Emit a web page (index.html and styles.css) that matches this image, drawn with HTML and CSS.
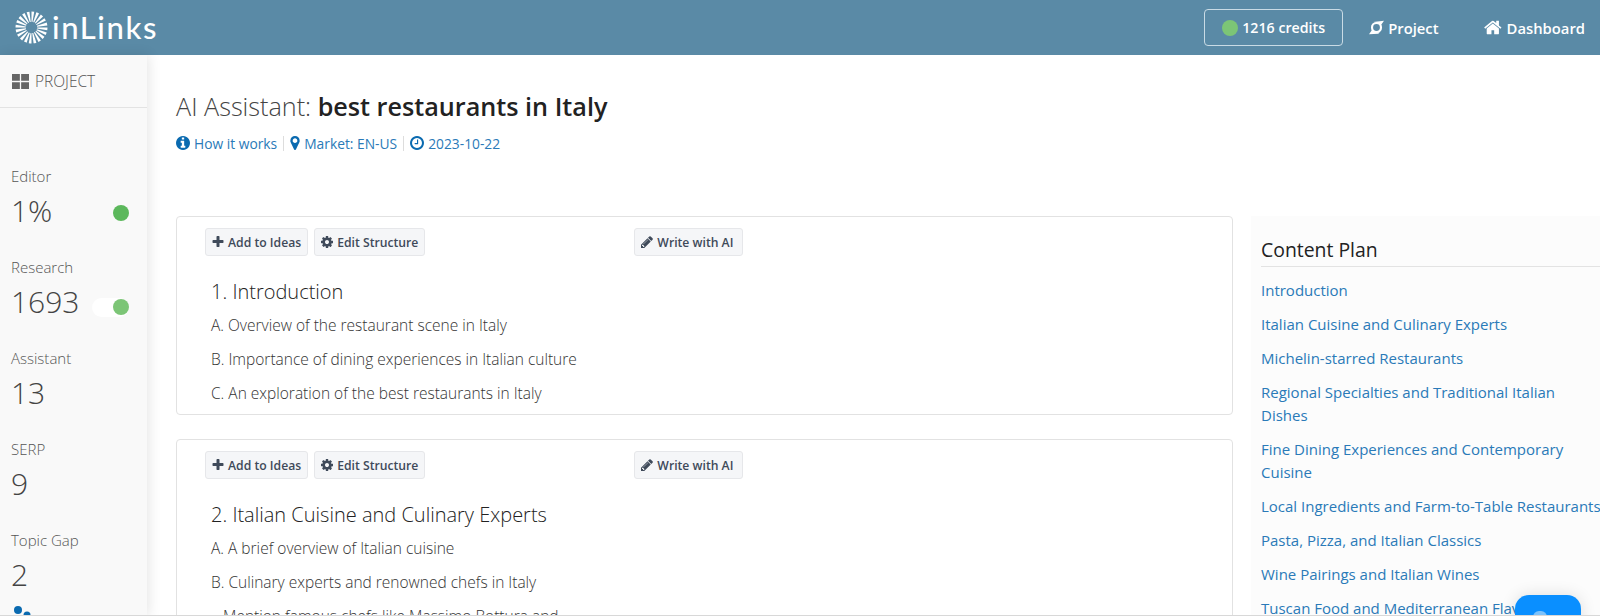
FILE: index.html
```html
<!DOCTYPE html>
<html lang="en">
<head>
    <meta charset="UTF-8">
    <title>AI Assistant</title>
    <link rel="stylesheet" href="styles.css">
</head>
<body>

    <header class="topbar">
        <a class="logo">
            <svg class="logo-mark" viewBox="0 0 32 32"><circle cx="16" cy="16" r="10.5" fill="none" stroke="#fff" stroke-width="10" pathLength="60" stroke-dasharray="1.7 1.3"/></svg>
            <span class="logo-text">inLinks</span>
        </a>
        <nav class="topnav">
            <span class="credits"><i class="dot dot-light"></i>1216 credits</span>
            <a class="navlink nav-project">
                <svg class="nav-icon" viewBox="1 1.500 18 17"><circle cx="10" cy="10" r="5.4" fill="none" stroke="#fff" stroke-width="2.6"/><path d="M6 3.500L19 2l-4 5.500-2-2.500zM1 18l4-5.500 2 2.500 7 1-2 1.500z" fill="#fff"/></svg>
                Project
            </a>
            <a class="navlink">
                <svg class="nav-icon home" viewBox="0 0 1792 1792"><path fill="#fff" d="M1408 992v480q0 26-19 45t-45 19h-384v-384h-256v384h-384q-26 0-45-19t-19-45v-480q0-1 .5-3t.5-3l575-474 575 474q1 2 1 6zm223-69l-62 74q-8 9-21 11h-3q-13 0-21-7l-692-577-692 577q-12 8-24 7-13-2-21-11l-62-74q-8-10-7-23.5t11-21.5l719-599q32-26 76-26t76 26l244 204v-195q0-14 9-23t23-9h192q14 0 23 9t9 23v408l219 182q10 8 11 21.5t-7 23.5z"/></svg>
                Dashboard
            </a>
        </nav>
    </header>

    <div class="page">
        <aside class="sidebar">
            <div class="side-head">
                <svg class="th-icon" viewBox="0 0 16 14"><path fill="#666" d="M0 0h7.4v6.4H0zM8.600 0H16v6.400H8.600zM0 7.600h7.400V14H0zM8.600 7.600H16V14H8.600z"/></svg>
                PROJECT
            </div>
            <div class="stats">
                <div class="stat">
                    <div class="stat-label">Editor</div>
                    <div class="stat-row"><span class="stat-value">1%</span><i class="dot dot-dark"></i></div>
                </div>
                <div class="stat">
                    <div class="stat-label">Research</div>
                    <div class="stat-row"><span class="stat-value">1693</span><span class="pill"><i class="dot dot-light"></i></span></div>
                </div>
                <div class="stat">
                    <div class="stat-label">Assistant</div>
                    <div class="stat-row"><span class="stat-value">13</span></div>
                </div>
                <div class="stat">
                    <div class="stat-label">SERP</div>
                    <div class="stat-row"><span class="stat-value">9</span></div>
                </div>
                <div class="stat">
                    <div class="stat-label">Topic Gap</div>
                    <div class="stat-row"><span class="stat-value">2</span></div>
                </div>
            </div>
            <svg class="side-extra" viewBox="0 0 20 14"><circle cx="4" cy="4" r="4" fill="#0a6ab0"/><circle cx="13" cy="9" r="3.500" fill="#0a6ab0"/></svg>
        </aside>

        <main class="main">
            <h1 class="title">AI Assistant: <b>best restaurants in Italy</b></h1>
            <div class="meta">
                <a><svg class="meta-icon" viewBox="128 128 1536 1536"><path d="M1152 1376v-160q0-14-9-23t-23-9h-96v-512q0-14-9-23t-23-9h-320q-14 0-23 9t-9 23v160q0 14 9 23t23 9h96v320h-96q-14 0-23 9t-9 23v160q0 14 9 23t23 9h448q14 0 23-9t9-23zm-128-896v-160q0-14-9-23t-23-9h-192q-14 0-23 9t-9 23v160q0 14 9 23t23 9h192q14 0 23-9t9-23zm640 416q0 209-103 385.500t-279.500 279.500-385.500 103-385.500-103-279.500-279.500-103-385.500 103-385.500 279.500-279.500 385.500-103 385.500 103 279.500 279.500 103 385.500z"/></svg>How it works</a>
                <span class="sep"></span>
                <a><svg class="meta-icon meta-pin" viewBox="384 128 1024 1536"><path d="M1152 640q0-106-75-181t-181-75-181 75-75 181 75 181 181 75 181-75 75-181zm256 0q0 109-33 179l-364 774q-16 33-47.500 52t-67.500 19-67.500-19-46.500-52l-365-774q-33-70-33-179 0-212 150-362t362-150 362 150 150 362z"/></svg>Market: EN-US</a>
                <span class="sep"></span>
                <a><svg class="meta-icon" viewBox="128 128 1536 1536"><path d="M1024 544v448q0 14-9 23t-23 9h-320q-14 0-23-9t-9-23v-64q0-14 9-23t23-9h224v-352q0-14 9-23t23-9h64q14 0 23 9t9 23zm416 352q0-148-73-273t-198-198-273-73-273 73-198 198-73 273 73 273 198 198 273 73 273-73 198-198 73-273zm224 0q0 209-103 385.500t-279.500 279.500-385.500 103-385.500-103-279.500-279.500-103-385.500 103-385.500 279.500-279.500 385.500-103 385.500 103 279.500 279.500 103 385.500z"/></svg>2023-10-22</a>
            </div>

            <div class="columns">
                <div class="sections">
                    <section class="card">
                        <div class="toolbar">
                            <button class="btn"><svg class="btn-icon" viewBox="128 128 1536 1536"><path d="M1600 736v192q0 40-28 68t-68 28h-416v416q0 40-28 68t-68 28h-192q-40 0-68-28t-28-68v-416h-416q-40 0-68-28t-28-68v-192q0-40 28-68t68-28h416v-416q0-40 28-68t68-28h192q40 0 68 28t28 68v416h416q40 0 68 28t28 68z"/></svg>Add to Ideas</button>
                            <button class="btn"><svg class="btn-icon" viewBox="128 128 1536 1536"><path d="M1152 896q0-106-75-181t-181-75-181 75-75 181 75 181 181 75 181-75 75-181zm512-109v222q0 12-8 23t-20 13l-185 28q-19 54-39 91 35 50 107 138 10 12 10 25t-9 23q-27 37-99 108t-94 71q-12 0-26-9l-138-108q-44 23-91 38-16 136-29 186-7 28-36 28h-222q-14 0-24.500-8.500t-11.500-21.500l-28-184q-49-16-90-37l-141 107q-10 9-25 9-14 0-25-11-126-114-165-168-7-10-7-23 0-12 8-23 15-21 51-66.500t54-70.500q-27-50-41-99l-183-27q-13-2-21-12.500t-8-23.500v-222q0-12 8-23t19-13l186-28q14-46 39-92-40-57-107-138-10-12-10-24 0-10 9-23 26-36 98.500-107.500t94.500-71.500q13 0 26 10l138 107q44-23 91-38 16-136 29-186 7-28 36-28h222q14 0 24.500 8.500t11.500 21.500l28 184q49 16 90 37l142-107q9-9 24-9 13 0 25 10 129 119 165 170 7 8 7 22 0 12-8 23-15 21-51 66.500t-54 70.500q26 50 41 98l183 28q13 2 21 12.500t8 23.500z"/></svg>Edit Structure</button>
                            <button class="btn btn-write"><svg class="btn-icon" viewBox="128 128 1536 1536"><path d="M491 1536l91-91-235-235-91 91v107h128v128h107zm523-928q0-22-22-22-10 0-17 7l-542 542q-7 7-7 17 0 22 22 22 10 0 17-7l542-542q7-7 7-17zm-54-192l416 416-832 832h-416v-416zm683 96q0 53-37 90l-166 166-416-416 166-165q36-38 90-38 53 0 91 38l235 234q37 39 37 91z"/></svg>Write with AI</button>
                        </div>
                        <h2 class="sec-title">1. Introduction</h2>
                        <p>A. Overview of the restaurant scene in Italy</p>
                        <p>B. Importance of dining experiences in Italian culture</p>
                        <p>C. An exploration of the best restaurants in Italy</p>
                    </section>

                    <section class="card">
                        <div class="toolbar">
                            <button class="btn"><svg class="btn-icon" viewBox="128 128 1536 1536"><path d="M1600 736v192q0 40-28 68t-68 28h-416v416q0 40-28 68t-68 28h-192q-40 0-68-28t-28-68v-416h-416q-40 0-68-28t-28-68v-192q0-40 28-68t68-28h416v-416q0-40 28-68t68-28h192q40 0 68 28t28 68v416h416q40 0 68 28t28 68z"/></svg>Add to Ideas</button>
                            <button class="btn"><svg class="btn-icon" viewBox="128 128 1536 1536"><path d="M1152 896q0-106-75-181t-181-75-181 75-75 181 75 181 181 75 181-75 75-181zm512-109v222q0 12-8 23t-20 13l-185 28q-19 54-39 91 35 50 107 138 10 12 10 25t-9 23q-27 37-99 108t-94 71q-12 0-26-9l-138-108q-44 23-91 38-16 136-29 186-7 28-36 28h-222q-14 0-24.500-8.500t-11.500-21.500l-28-184q-49-16-90-37l-141 107q-10 9-25 9-14 0-25-11-126-114-165-168-7-10-7-23 0-12 8-23 15-21 51-66.500t54-70.500q-27-50-41-99l-183-27q-13-2-21-12.500t-8-23.500v-222q0-12 8-23t19-13l186-28q14-46 39-92-40-57-107-138-10-12-10-24 0-10 9-23 26-36 98.500-107.500t94.500-71.500q13 0 26 10l138 107q44-23 91-38 16-136 29-186 7-28 36-28h222q14 0 24.500 8.500t11.500 21.500l28 184q49 16 90 37l142-107q9-9 24-9 13 0 25 10 129 119 165 170 7 8 7 22 0 12-8 23-15 21-51 66.500t-54 70.500q26 50 41 98l183 28q13 2 21 12.500t8 23.500z"/></svg>Edit Structure</button>
                            <button class="btn btn-write"><svg class="btn-icon" viewBox="128 128 1536 1536"><path d="M491 1536l91-91-235-235-91 91v107h128v128h107zm523-928q0-22-22-22-10 0-17 7l-542 542q-7 7-7 17 0 22 22 22 10 0 17-7l542-542q7-7 7-17zm-54-192l416 416-832 832h-416v-416zm683 96q0 53-37 90l-166 166-416-416 166-165q36-38 90-38 53 0 91 38l235 234q37 39 37 91z"/></svg>Write with AI</button>
                        </div>
                        <h2 class="sec-title">2. Italian Cuisine and Culinary Experts</h2>
                        <p>A. A brief overview of Italian cuisine</p>
                        <p>B. Culinary experts and renowned chefs in Italy</p>
                        <p class="sub">- Mention famous chefs like Massimo Bottura and</p>
                    </section>
                </div>

                <div class="plan">
                    <h3 class="plan-title">Content Plan</h3>
                    <a>Introduction</a>
                    <a>Italian Cuisine and Culinary Experts</a>
                    <a>Michelin-starred Restaurants</a>
                    <a>Regional Specialties and Traditional Italian Dishes</a>
                    <a>Fine Dining Experiences and Contemporary Cuisine</a>
                    <a class="nowrap">Local Ingredients and Farm-to-Table Restaurants</a>
                    <a>Pasta, Pizza, and Italian Classics</a>
                    <a>Wine Pairings and Italian Wines</a>
                    <a class="nowrap">Tuscan Food and Mediterranean Flavors</a>
                </div>
            </div>
        </main>
    </div>

    <div class="chat"><i class="chat-dot"></i></div>
    <div class="edge"></div>

</body>
</html>
```

FILE: styles.css
```css
* {
    box-sizing: border-box;
}
html, body {
    height: 100%;
    overflow: hidden;
}
body {
    margin: 0;
    font-family: "Open Sans", "Liberation Sans", sans-serif;
    font-size: 14px;
    color: #444;
    background: #fff;
}
.topbar {
    height: 55px;
    background-color: #5a8aa6;
    display: flex;
    align-items: center;
    justify-content: space-between;
    padding: 0 15px;
    color: #fff;
}
.logo {
    display: flex;
    align-items: center;
    gap: 4px;
}
.logo-mark {
    width: 33px;
    height: 33px;
}
.logo-text {
    font-family: "Lato", sans-serif;
    font-size: 31px;
    font-weight: 500;
    letter-spacing: 1.6px;
    line-height: 1;
}
.topnav {
    display: flex;
    align-items: center;
    font-weight: 600;
    font-size: 14.8px;
}
.credits {
    width: 139px;
    height: 37px;
    border: 1px solid #c9dbe5;
    border-radius: 4px;
    display: flex;
    align-items: center;
    justify-content: center;
    gap: 4px;
    font-size: 14.2px;
}
.navlink {
    display: flex;
    align-items: center;
    gap: 4px;
}
.nav-project {
    margin: 0 45px 0 26px;
}
.nav-icon {
    width: 15px;
    height: 15px;
}
.home {
    width: 19px;
    height: 19px;
}
.dot {
    display: inline-block;
    width: 16px;
    height: 16px;
    border-radius: 50%;
}
.dot-light {
    background-color: #7cc576;
}
.dot-dark {
    background-color: #5cb85c;
    margin: 6px 6px 0 0;
}
.page {
    display: flex;
    height: calc(100% - 55px);
}
.sidebar {
    width: 147px;
    flex-shrink: 0;
    background-color: #f9f9f9;
    box-shadow: 2px 0 12px rgba(0, 0, 0, 0.1);
    position: relative;
    overflow: hidden;
}
.side-head {
    height: 53px;
    border-bottom: 1px solid #e3e3e3;
    padding: 0 12px;
    display: flex;
    align-items: center;
    gap: 6px;
    font-size: 15.5px;
    font-weight: 300;
    color: #555;
}
.th-icon {
    width: 17px;
    height: 15px;
}
.stats {
    padding: 58px 12px 0 11px;
}
.stat {
    height: 91px;
}
.stat-label {
    font-size: 15px;
    line-height: 20px;
    font-weight: 300;
    color: #555;
}
.stat-row {
    display: flex;
    align-items: center;
    justify-content: space-between;
    height: 48px;
}
.stat-value {
    font-size: 30px;
    font-weight: 300;
    color: #444;
}
.pill {
    width: 37px;
    height: 19px;
    margin: 12px 6px 0 0;
    background: #fff;
    border-radius: 10px;
    display: flex;
    align-items: center;
    justify-content: flex-end;
}
.side-extra {
    position: absolute;
    left: 14px;
    bottom: -4px;
    width: 20px;
    height: 14px;
}
.main {
    flex: 1;
    min-width: 0;
    padding: 0 0 0 29px;
}
.title {
    margin: 34px 0 0;
    font-size: 25.2px;
    line-height: 34px;
    font-weight: 300;
    color: #444;
}
.title b {
    font-weight: 600;
    color: #222;
}
.meta {
    display: flex;
    align-items: center;
    margin-top: 10px;
    font-size: 13.8px;
    height: 20px;
    color: #2a7ab8;
}
.meta a {
    display: flex;
    align-items: center;
    gap: 4px;
}
.meta-icon {
    width: 14px;
    height: 14px;
    fill: #0a6ab0;
}
.meta-pin {
    width: 10px;
}
.sep {
    width: 1px;
    height: 15px;
    background: #ddd;
    margin: 0 6px;
}
.columns {
    display: flex;
    gap: 18px;
    margin-top: 63px;
}
.sections {
    width: 1057px;
    flex-shrink: 0;
    display: flex;
    flex-direction: column;
    gap: 24px;
}
.card {
    border: 1px solid #e2e2e2;
    border-radius: 4px;
    padding: 11px 28px 0;
    height: 199px;
    background: #fff;
}
.toolbar {
    display: flex;
    gap: 6px;
}
.btn {
    height: 28px;
    padding: 0 6px;
    display: flex;
    align-items: center;
    gap: 4px;
    background-color: #f5f6f8;
    border: 1px solid #e6e7ea;
    border-radius: 3px;
    font-family: "Open Sans", sans-serif;
    font-size: 12.2px;
    font-weight: 600;
    color: #3f4a5a;
}
.btn-write {
    margin-left: 203px;
    padding-right: 9px;
}
.btn-icon {
    width: 12px;
    height: 12px;
    fill: #3f4a5a;
}
.sec-title {
    margin: 23px 0 0 6px;
    font-size: 20px;
    line-height: 26px;
    font-weight: 300;
    color: #222;
}
.card p {
    margin: 8px 0 0 6px;
    font-size: 15.5px;
    line-height: 26px;
    font-weight: 300;
    color: #333;
}
.card .sec-title + p {
    margin-top: 7px;
}
.card p.sub {
    margin-left: 9px;
}
.plan {
    flex: 1;
    min-width: 0;
    background-color: #fcfcfc;
    padding: 21px 0 0 10px;
    display: flex;
    flex-direction: column;
    overflow: hidden;
    font-size: 15px;
}
.plan-title {
    margin: 0 0 12px;
    padding-bottom: 3px;
    border-bottom: 1px solid #e3e3e3;
    font-size: 19.4px;
    line-height: 26px;
    font-weight: 500;
    color: #222;
}
.plan a {
    color: #2a7ab8;
    line-height: 23px;
    margin-bottom: 11px;
    max-width: 320px;
}
.plan a.nowrap {
    white-space: nowrap;
    max-width: none;
}
.chat {
    position: absolute;
    left: 1515px;
    top: 595px;
    width: 66px;
    height: 60px;
    background-color: #0a8fff;
    border-radius: 14px;
    box-shadow: 0 0 16px rgba(0, 0, 0, 0.12);
}
.chat-dot {
    position: absolute;
    left: 18px;
    top: 16px;
    width: 14px;
    height: 14px;
    background: #7cc2fb;
    border-radius: 6px;
}
.edge {
    position: absolute;
    left: 0;
    right: 0;
    top: 615px;
    height: 1px;
    background: #d8d8d8;
}
```
